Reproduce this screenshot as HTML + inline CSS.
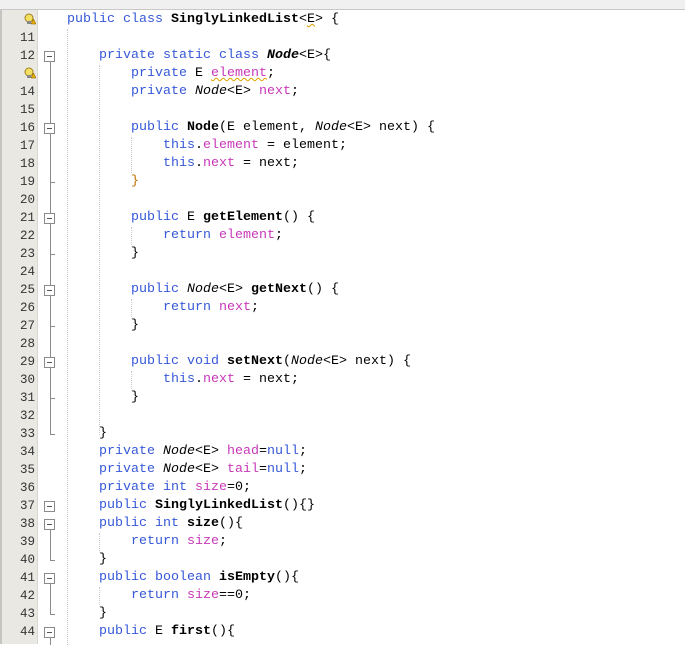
<!DOCTYPE html>
<html><head><meta charset="utf-8"><style>
body{margin:0;width:685px;height:644px;overflow:hidden;background:#fff;position:relative;font-family:"Liberation Mono",monospace;font-size:13.33px}
.tb{position:absolute;left:0;top:0;width:685px;height:9px;background:#f0f0f0;border-bottom:1px solid #c8c8c8}
.g{position:absolute;left:0;top:10px;width:38px;height:634px;background:#e9e8e3;border-right:1px solid #d8d8d2;border-left:2px solid #c4c4c0;box-sizing:border-box}
.w{position:absolute;left:0;top:1px;width:685px;height:644px}
.n{position:absolute;left:0;width:35px;text-align:right;color:#333;height:18px;line-height:18px;font-size:12.5px}
.l{position:absolute;left:67px;height:18px;line-height:18px;white-space:pre;color:#000}
.k{color:#3658d8}.f{color:#c838b8}.b{font-weight:bold}.i{font-style:italic}.o{color:#c07000}
.box{position:absolute;left:44px;width:11px;height:11px;border:1px solid #8a8a8a;background:#fff;box-sizing:border-box;margin-top:-1px}
.box:after{content:"";position:absolute;left:2px;top:4px;width:5px;height:1px;background:#555}
.vl{position:absolute;left:50px;width:1px;background:#8a8a8a}
.tk{position:absolute;left:50px;width:5px;height:1px;background:#8a8a8a}
.dg{position:absolute;width:0;border-left:1px dotted #c8c8c8}
.bulb{position:absolute;left:24px;width:12px;height:12px}
.sq{text-decoration:underline wavy #e0a000;text-decoration-thickness:1px}
</style></head><body>
<div class="tb"></div>
<div class="g"></div>
<div class="w">
<div class="dg" style="left:67px;top:28px;height:616px"></div>
<div class="dg" style="left:99px;top:64px;height:370px"></div>
<div class="dg" style="left:131px;top:136px;height:36px"></div>
<div class="dg" style="left:131px;top:226px;height:18px"></div>
<div class="dg" style="left:131px;top:298px;height:18px"></div>
<div class="dg" style="left:131px;top:370px;height:18px"></div>
<div class="dg" style="left:99px;top:532px;height:18px"></div>
<div class="dg" style="left:99px;top:586px;height:18px"></div>
<svg class="bulb" style="top:12px" viewBox="0 0 12 12"><circle cx="5" cy="5" r="4" fill="#f4e060" stroke="#a08020"/><rect x="3" y="8" width="4" height="3" fill="#888"/><path d="M7 11 L9.5 6 L12 11Z" fill="#e8b000" stroke="#805000" stroke-width=".5"/></svg>
<svg class="bulb" style="top:66px" viewBox="0 0 12 12"><circle cx="5" cy="5" r="4" fill="#f4e060" stroke="#a08020"/><rect x="3" y="8" width="4" height="3" fill="#888"/><path d="M7 11 L9.5 6 L12 11Z" fill="#e8b000" stroke="#805000" stroke-width=".5"/></svg>
<div class="n" style="top:28px">11</div><div class="n" style="top:46px">12</div><div class="n" style="top:82px">14</div>
<div class="n" style="top:100px">15</div><div class="n" style="top:118px">16</div><div class="n" style="top:136px">17</div>
<div class="n" style="top:154px">18</div><div class="n" style="top:172px">19</div><div class="n" style="top:190px">20</div>
<div class="n" style="top:208px">21</div><div class="n" style="top:226px">22</div><div class="n" style="top:244px">23</div>
<div class="n" style="top:262px">24</div><div class="n" style="top:280px">25</div><div class="n" style="top:298px">26</div>
<div class="n" style="top:316px">27</div><div class="n" style="top:334px">28</div><div class="n" style="top:352px">29</div>
<div class="n" style="top:370px">30</div><div class="n" style="top:388px">31</div><div class="n" style="top:406px">32</div>
<div class="n" style="top:424px">33</div><div class="n" style="top:442px">34</div><div class="n" style="top:460px">35</div>
<div class="n" style="top:478px">36</div><div class="n" style="top:496px">37</div><div class="n" style="top:514px">38</div>
<div class="n" style="top:532px">39</div><div class="n" style="top:550px">40</div><div class="n" style="top:568px">41</div>
<div class="n" style="top:586px">42</div><div class="n" style="top:604px">43</div><div class="n" style="top:622px">44</div>
<div class="vl" style="top:55px;height:378px"></div><div class="tk" style="top:433px"></div>
<div class="box" style="top:51px"></div>
<div class="box" style="top:123px"></div><div class="tk" style="top:181px"></div>
<div class="box" style="top:213px"></div><div class="tk" style="top:253px"></div>
<div class="box" style="top:285px"></div><div class="tk" style="top:325px"></div>
<div class="box" style="top:357px"></div><div class="tk" style="top:397px"></div>
<div class="box" style="top:501px"></div>
<div class="vl" style="top:523px;height:36px"></div><div class="tk" style="top:559px"></div><div class="box" style="top:519px"></div>
<div class="vl" style="top:577px;height:36px"></div><div class="tk" style="top:613px"></div><div class="box" style="top:573px"></div>
<div class="vl" style="top:631px;height:13px"></div><div class="box" style="top:627px"></div>
<div class="l" style="top:10px"><span class="k">public class</span> <span class="b">SinglyLinkedList</span>&lt;<span class="sq">E</span>&gt; {</div>
<div class="l" style="top:46px">    <span class="k">private static class</span> <span class="b i">Node</span>&lt;E&gt;{</div>
<div class="l" style="top:64px">        <span class="k">private</span> E <span class="f sq">element</span>;</div>
<div class="l" style="top:82px">        <span class="k">private</span> <span class="i">Node</span>&lt;E&gt; <span class="f">next</span>;</div>
<div class="l" style="top:118px">        <span class="k">public</span> <span class="b">Node</span>(E element, <span class="i">Node</span>&lt;E&gt; next) {</div>
<div class="l" style="top:136px">            <span class="k">this</span>.<span class="f">element</span> = element;</div>
<div class="l" style="top:154px">            <span class="k">this</span>.<span class="f">next</span> = next;</div>
<div class="l" style="top:172px">        <span class="o">}</span></div>
<div class="l" style="top:208px">        <span class="k">public</span> E <span class="b">getElement</span>() {</div>
<div class="l" style="top:226px">            <span class="k">return</span> <span class="f">element</span>;</div>
<div class="l" style="top:244px">        }</div>
<div class="l" style="top:280px">        <span class="k">public</span> <span class="i">Node</span>&lt;E&gt; <span class="b">getNext</span>() {</div>
<div class="l" style="top:298px">            <span class="k">return</span> <span class="f">next</span>;</div>
<div class="l" style="top:316px">        }</div>
<div class="l" style="top:352px">        <span class="k">public void</span> <span class="b">setNext</span>(<span class="i">Node</span>&lt;E&gt; next) {</div>
<div class="l" style="top:370px">            <span class="k">this</span>.<span class="f">next</span> = next;</div>
<div class="l" style="top:388px">        }</div>
<div class="l" style="top:424px">    }</div>
<div class="l" style="top:442px">    <span class="k">private</span> <span class="i">Node</span>&lt;E&gt; <span class="f">head</span>=<span class="k">null</span>;</div>
<div class="l" style="top:460px">    <span class="k">private</span> <span class="i">Node</span>&lt;E&gt; <span class="f">tail</span>=<span class="k">null</span>;</div>
<div class="l" style="top:478px">    <span class="k">private int</span> <span class="f">size</span>=0;</div>
<div class="l" style="top:496px">    <span class="k">public</span> <span class="b">SinglyLinkedList</span>(){}</div>
<div class="l" style="top:514px">    <span class="k">public int</span> <span class="b">size</span>(){</div>
<div class="l" style="top:532px">        <span class="k">return</span> <span class="f">size</span>;</div>
<div class="l" style="top:550px">    }</div>
<div class="l" style="top:568px">    <span class="k">public boolean</span> <span class="b">isEmpty</span>(){</div>
<div class="l" style="top:586px">        <span class="k">return</span> <span class="f">size</span>==0;</div>
<div class="l" style="top:604px">    }</div>
<div class="l" style="top:622px">    <span class="k">public</span> E <span class="b">first</span>(){</div>
</div>
</body></html>
